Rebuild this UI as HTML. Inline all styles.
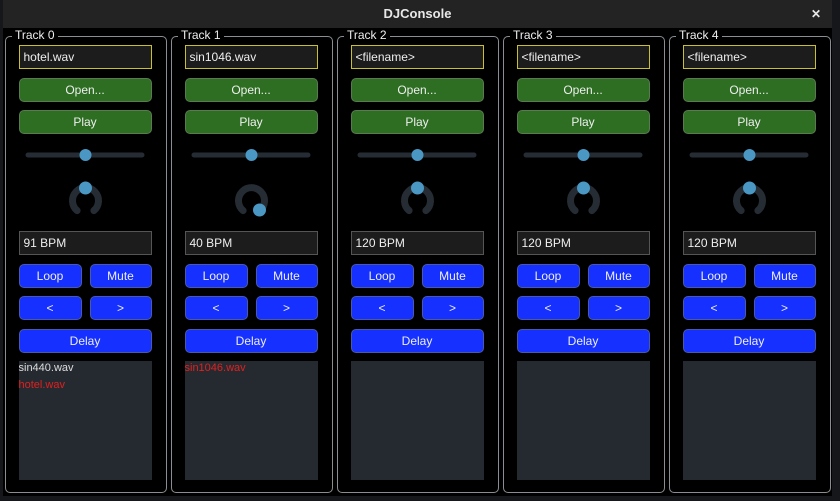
<!DOCTYPE html>
<html><head><meta charset="utf-8"><style>
*{box-sizing:border-box;margin:0;padding:0}
body{width:840px;height:501px;background:#16171b;font-family:"Liberation Sans",sans-serif;position:relative;overflow:hidden;font-size:12px;color:#fff}
#win{position:absolute;left:3px;top:0;width:829px;height:496px;background:#000}
#title{position:absolute;left:0;top:0;width:829px;height:28px;background:#232323;text-align:center;line-height:28px;font-weight:bold;font-size:13px;color:#e8e8e8}
#close{position:absolute;right:11px;top:0;font-size:12px;font-weight:bold}
.tr{position:absolute;top:36px;width:162px;height:457px;border:1.5px solid #8a8e92;border-radius:5px}
.lbl{position:absolute;left:6px;top:-9px;background:#000;padding:0 3px;font-size:12px;color:#eee}
.in{position:absolute;left:12.5px;width:133px;height:24px;background:#1c1c1c;border:1px solid #555;padding-left:4px;line-height:22px;font-size:12px;color:#eee}
.fn{top:7.5px;border-color:#c8c030}
.b{position:absolute;height:24px;border-radius:5px;text-align:center;line-height:22px;font-size:12px;color:#eee}
.g{background:#2d6e22;border:1px solid #5a7a50;left:12.5px;width:133px}
.bl{background:#1530ff;border:1px solid #4a5aa8}
.list{position:absolute;left:12.5px;top:323.5px;width:133px;height:119px;background:#252a30;font-size:11px;padding-top:0}
</style></head><body>
<div id="win"><div id="title">DJConsole<span id="close">✕</span></div></div>

<div class="tr" style="left:5px"><div class="lbl">Track 0</div>
<div class="in fn">hotel.wav</div>
<div class="b g" style="top:40.5px">Open...</div><div class="b g" style="top:72.5px">Play</div>
<svg style="position:absolute;left:0;top:100px" width="158" height="90"><rect x="19.5" y="15.5" width="119" height="5" rx="2.5" fill="#262c33"/><circle cx="79.5" cy="18" r="6" fill="#4a97c4"/>
<path d="M71.1 73.6 A13 13 0 1 1 87.9 73.6" fill="none" stroke="#262c33" stroke-width="7" stroke-linecap="round"/><circle cx="79.5" cy="51" r="6.5" fill="#4a97c4"/></svg>
<div class="in" style="top:193.5px">91 BPM</div>
<div class="b bl" style="top:226.5px;left:12.5px;width:63px">Loop</div><div class="b bl" style="top:226.5px;left:83.5px;width:62px">Mute</div>
<div class="b bl" style="top:258.5px;left:12.5px;width:63px">&lt;</div><div class="b bl" style="top:258.5px;left:83.5px;width:62px">&gt;</div>
<div class="b bl" style="top:291.5px;left:12.5px;width:133px">Delay</div>
<div class="list"><div style="color:#ddd;height:18px;line-height:14px">sin440.wav</div><div style="color:#e02020">hotel.wav</div></div></div>

<div class="tr" style="left:171px"><div class="lbl">Track 1</div>
<div class="in fn">sin1046.wav</div>
<div class="b g" style="top:40.5px">Open...</div><div class="b g" style="top:72.5px">Play</div>
<svg style="position:absolute;left:0;top:100px" width="158" height="90"><rect x="19.5" y="15.5" width="119" height="5" rx="2.5" fill="#262c33"/><circle cx="79.5" cy="18" r="6" fill="#4a97c4"/>
<path d="M71.1 73.6 A13 13 0 1 1 87.9 73.6" fill="none" stroke="#262c33" stroke-width="7" stroke-linecap="round"/><circle cx="87.5" cy="73" r="6.5" fill="#4a97c4"/></svg>
<div class="in" style="top:193.5px">40 BPM</div>
<div class="b bl" style="top:226.5px;left:12.5px;width:63px">Loop</div><div class="b bl" style="top:226.5px;left:83.5px;width:62px">Mute</div>
<div class="b bl" style="top:258.5px;left:12.5px;width:63px">&lt;</div><div class="b bl" style="top:258.5px;left:83.5px;width:62px">&gt;</div>
<div class="b bl" style="top:291.5px;left:12.5px;width:133px">Delay</div>
<div class="list"><div style="color:#e02020;line-height:14px">sin1046.wav</div></div></div>

<div class="tr" style="left:337px"><div class="lbl">Track 2</div>
<div class="in fn">&lt;filename&gt;</div>
<div class="b g" style="top:40.5px">Open...</div><div class="b g" style="top:72.5px">Play</div>
<svg style="position:absolute;left:0;top:100px" width="158" height="90"><rect x="19.5" y="15.5" width="119" height="5" rx="2.5" fill="#262c33"/><circle cx="79.5" cy="18" r="6" fill="#4a97c4"/>
<path d="M71.1 73.6 A13 13 0 1 1 87.9 73.6" fill="none" stroke="#262c33" stroke-width="7" stroke-linecap="round"/><circle cx="79.5" cy="51" r="6.5" fill="#4a97c4"/></svg>
<div class="in" style="top:193.5px">120 BPM</div>
<div class="b bl" style="top:226.5px;left:12.5px;width:63px">Loop</div><div class="b bl" style="top:226.5px;left:83.5px;width:62px">Mute</div>
<div class="b bl" style="top:258.5px;left:12.5px;width:63px">&lt;</div><div class="b bl" style="top:258.5px;left:83.5px;width:62px">&gt;</div>
<div class="b bl" style="top:291.5px;left:12.5px;width:133px">Delay</div>
<div class="list"></div></div>

<div class="tr" style="left:503px"><div class="lbl">Track 3</div>
<div class="in fn">&lt;filename&gt;</div>
<div class="b g" style="top:40.5px">Open...</div><div class="b g" style="top:72.5px">Play</div>
<svg style="position:absolute;left:0;top:100px" width="158" height="90"><rect x="19.5" y="15.5" width="119" height="5" rx="2.5" fill="#262c33"/><circle cx="79.5" cy="18" r="6" fill="#4a97c4"/>
<path d="M71.1 73.6 A13 13 0 1 1 87.9 73.6" fill="none" stroke="#262c33" stroke-width="7" stroke-linecap="round"/><circle cx="79.5" cy="51" r="6.5" fill="#4a97c4"/></svg>
<div class="in" style="top:193.5px">120 BPM</div>
<div class="b bl" style="top:226.5px;left:12.5px;width:63px">Loop</div><div class="b bl" style="top:226.5px;left:83.5px;width:62px">Mute</div>
<div class="b bl" style="top:258.5px;left:12.5px;width:63px">&lt;</div><div class="b bl" style="top:258.5px;left:83.5px;width:62px">&gt;</div>
<div class="b bl" style="top:291.5px;left:12.5px;width:133px">Delay</div>
<div class="list"></div></div>

<div class="tr" style="left:669px"><div class="lbl">Track 4</div>
<div class="in fn">&lt;filename&gt;</div>
<div class="b g" style="top:40.5px">Open...</div><div class="b g" style="top:72.5px">Play</div>
<svg style="position:absolute;left:0;top:100px" width="158" height="90"><rect x="19.5" y="15.5" width="119" height="5" rx="2.5" fill="#262c33"/><circle cx="79.5" cy="18" r="6" fill="#4a97c4"/>
<path d="M71.1 73.6 A13 13 0 1 1 87.9 73.6" fill="none" stroke="#262c33" stroke-width="7" stroke-linecap="round"/><circle cx="79.5" cy="51" r="6.5" fill="#4a97c4"/></svg>
<div class="in" style="top:193.5px">120 BPM</div>
<div class="b bl" style="top:226.5px;left:12.5px;width:63px">Loop</div><div class="b bl" style="top:226.5px;left:83.5px;width:62px">Mute</div>
<div class="b bl" style="top:258.5px;left:12.5px;width:63px">&lt;</div><div class="b bl" style="top:258.5px;left:83.5px;width:62px">&gt;</div>
<div class="b bl" style="top:291.5px;left:12.5px;width:133px">Delay</div>
<div class="list"></div></div>
</body></html>
